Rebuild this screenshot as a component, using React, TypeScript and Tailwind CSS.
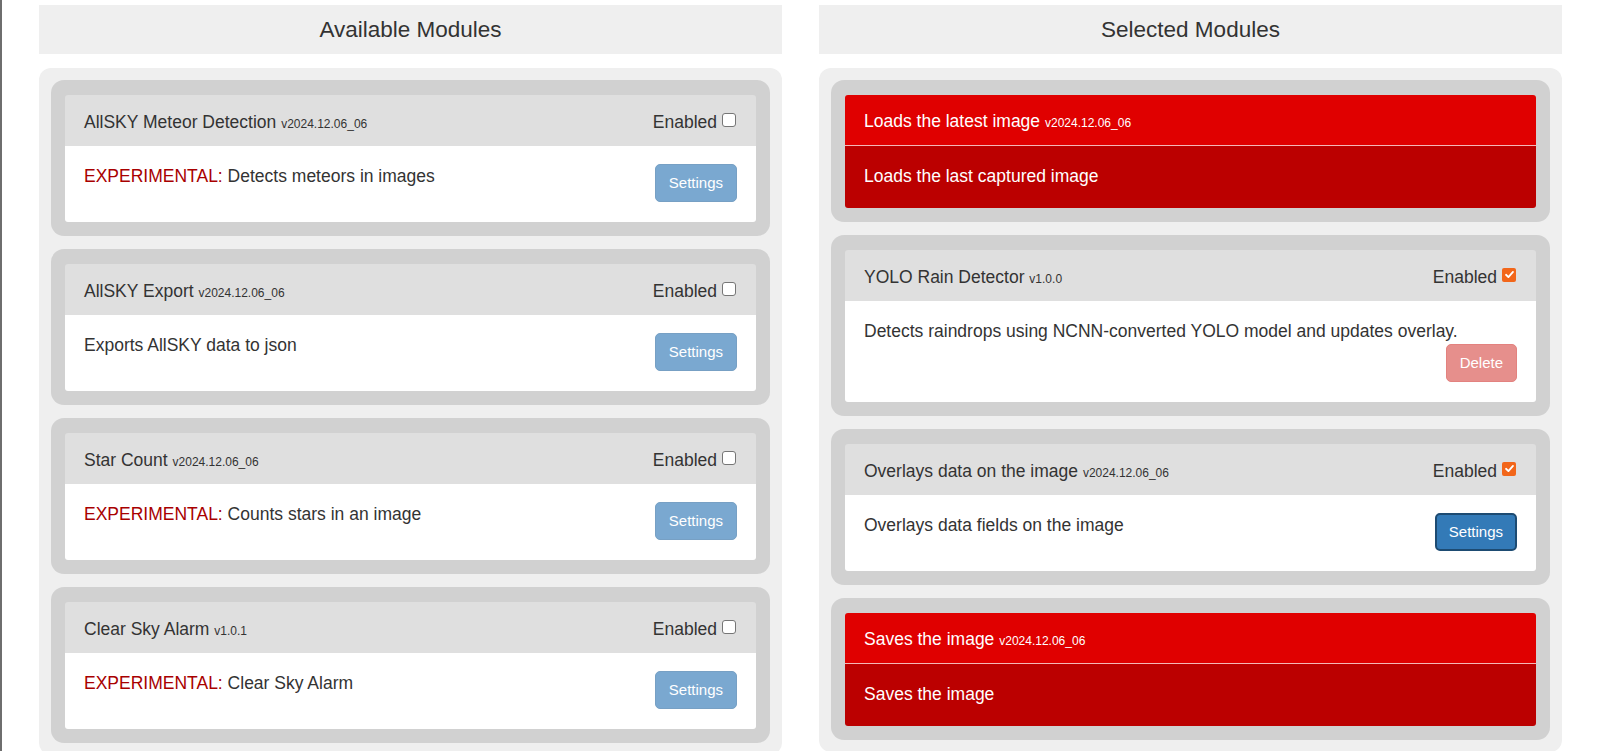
import React from "react";

type Module = {
  name: string;
  version: string;
  description: string;
  experimental?: boolean;
  enabled?: boolean;
  error?: boolean;
  action?: "settings" | "settings-active" | "delete";
};

const available: Module[] = [
  {
    name: "AllSKY Meteor Detection",
    version: "v2024.12.06_06",
    description: "Detects meteors in images",
    experimental: true,
    action: "settings",
  },
  {
    name: "AllSKY Export",
    version: "v2024.12.06_06",
    description: "Exports AllSKY data to json",
    action: "settings",
  },
  {
    name: "Star Count",
    version: "v2024.12.06_06",
    description: "Counts stars in an image",
    experimental: true,
    action: "settings",
  },
  {
    name: "Clear Sky Alarm",
    version: "v1.0.1",
    description: "Clear Sky Alarm",
    experimental: true,
    action: "settings",
  },
];

const selected: Module[] = [
  {
    name: "Loads the latest image",
    version: "v2024.12.06_06",
    description: "Loads the last captured image",
    error: true,
  },
  {
    name: "YOLO Rain Detector",
    version: "v1.0.0",
    description:
      "Detects raindrops using NCNN-converted YOLO model and updates overlay.",
    enabled: true,
    action: "delete",
  },
  {
    name: "Overlays data on the image",
    version: "v2024.12.06_06",
    description: "Overlays data fields on the image",
    enabled: true,
    action: "settings-active",
  },
  {
    name: "Saves the image",
    version: "v2024.12.06_06",
    description: "Saves the image",
    error: true,
  },
];

function Checkbox({ checked }: { checked?: boolean }) {
  if (checked) {
    return (
      <span className="mb-[5px] flex h-[14px] w-[14px] items-center justify-center rounded-[2px] bg-[#f2661a]">
        <svg viewBox="0 0 12 12" className="h-[11px] w-[11px]">
          <path
            d="M2.2 6.3 L4.8 8.8 L9.8 3.2"
            fill="none"
            stroke="white"
            strokeWidth="2"
            strokeLinecap="round"
            strokeLinejoin="round"
          />
        </svg>
      </span>
    );
  }
  return (
    <span className="mb-[5px] block h-[14px] w-[14px] rounded-[3px] border border-[#767676] bg-white" />
  );
}

function ActionButton({ kind }: { kind: Module["action"] }) {
  if (kind === "delete") {
    return (
      <button className="h-[38px] rounded-[5px] border border-[#e3827f] bg-[#e68f8c] px-[13px] text-[15px] text-white">
        Delete
      </button>
    );
  }
  if (kind === "settings-active") {
    return (
      <button className="h-[38px] rounded-[5px] border-2 border-[#1d4b72] bg-[#337ab7] px-[12px] text-[15px] text-white">
        Settings
      </button>
    );
  }
  return (
    <button className="h-[38px] rounded-[5px] border border-[#77a0c4] bg-[#7aa8d0] px-[13px] text-[15px] text-white">
      Settings
    </button>
  );
}

function ModuleCard({ module }: { module: Module }) {
  if (module.error) {
    return (
      <div className="rounded-[13px] bg-[#d1d1d1] px-[14px] pb-[14px] pt-[15px]">
        <div className="overflow-hidden rounded-[3px] text-white">
          <div className="flex h-[51px] items-center border-b border-[#f4b8b8] bg-[#e00000] px-[19px] pt-[3px]">
            <span className="text-[17.5px]">
              {module.name}{" "}
              <span className="text-[12px]">{module.version}</span>
            </span>
          </div>
          <div className="h-[62px] bg-[#bb0000] px-[19px] pt-[18px] text-[17.5px] leading-[25px]">
            {module.description}
          </div>
        </div>
      </div>
    );
  }

  const stacked = module.action === "delete";

  return (
    <div className="rounded-[13px] bg-[#d1d1d1] px-[14px] pb-[14px] pt-[15px]">
      <div className="overflow-hidden rounded-[3px]">
        <div className="flex h-[51px] items-center justify-between bg-[#dfdfdf] pl-[19px] pr-[20px] pt-[3px]">
          <span className="text-[17.5px]">
            {module.name}{" "}
            <span className="text-[12px]">{module.version}</span>
          </span>
          <span className="flex items-center gap-[5px] text-[17.5px]">
            Enabled
            <Checkbox checked={module.enabled} />
          </span>
        </div>
        {stacked ? (
          <div className="bg-white px-[19px] pb-[20px] pt-[18px]">
            <p className="text-[17.5px] leading-[25px]">{module.description}</p>
            <div className="flex justify-end">
              <ActionButton kind={module.action} />
            </div>
          </div>
        ) : (
          <div className="flex h-[76px] items-start justify-between bg-white px-[19px] pt-[18px]">
            <p className="text-[17.5px] leading-[25px]">
              {module.experimental && (
                <span className="text-[#a80000]">EXPERIMENTAL: </span>
              )}
              {module.description}
            </p>
            <ActionButton kind={module.action} />
          </div>
        )}
      </div>
    </div>
  );
}

function Column({ title, modules }: { title: string; modules: Module[] }) {
  return (
    <div>
      <div className="mt-[5px] flex h-[49px] items-center justify-center bg-[#efefef] text-[22.5px]">
        {title}
      </div>
      <div className="mt-[14px] flex flex-col gap-[13px] rounded-[12px] bg-[#efefef] px-[12px] py-[12px]">
        {modules.map((m) => (
          <ModuleCard key={m.name} module={m} />
        ))}
      </div>
    </div>
  );
}

export default function App() {
  return (
    <div className="h-[751px] overflow-hidden border-l-2 border-[#6e6e6e] bg-white font-['Liberation_Sans',Arial,sans-serif] text-[#333]">
      <div className="grid grid-cols-[743px_743px] gap-x-[37px] pl-[37px]">
        <Column title="Available Modules" modules={available} />
        <Column title="Selected Modules" modules={selected} />
      </div>
    </div>
  );
}
